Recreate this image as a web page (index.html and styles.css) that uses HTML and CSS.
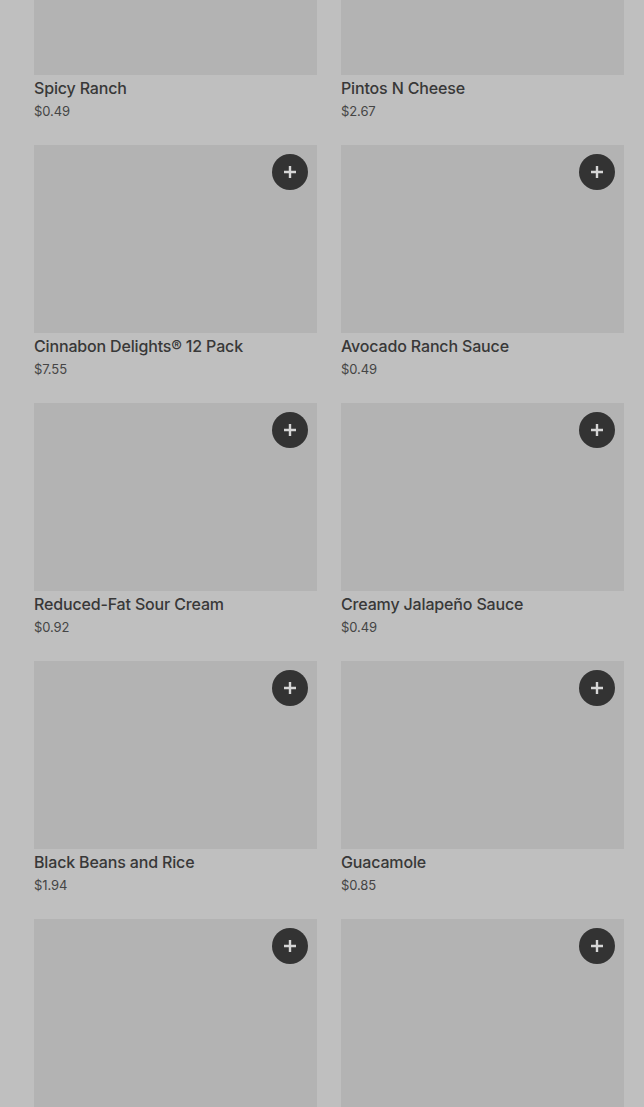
FILE: index.html
```html
<!DOCTYPE html>
<html>
<head>
<meta charset="utf-8">
<link rel="stylesheet" href="styles.css">
</head>
<body>
<div class="grid">
  <div class="card"><div class="img"></div><div class="name">Spicy Ranch</div><div class="price">$0.49</div></div>
  <div class="card"><div class="img"></div><div class="name">Pintos N Cheese</div><div class="price">$2.67</div></div>
  <div class="card"><div class="img"><span class="add"><svg width="14" height="14" viewBox="0 0 14 14"><path d="M7 1v12M1 7h12" stroke="currentColor" stroke-width="2.4"/></svg></span></div><div class="name">Cinnabon Delights® 12 Pack</div><div class="price">$7.55</div></div>
  <div class="card"><div class="img"><span class="add"><svg width="14" height="14" viewBox="0 0 14 14"><path d="M7 1v12M1 7h12" stroke="currentColor" stroke-width="2.4"/></svg></span></div><div class="name">Avocado Ranch Sauce</div><div class="price">$0.49</div></div>
  <div class="card"><div class="img"><span class="add"><svg width="14" height="14" viewBox="0 0 14 14"><path d="M7 1v12M1 7h12" stroke="currentColor" stroke-width="2.4"/></svg></span></div><div class="name">Reduced-Fat Sour Cream</div><div class="price">$0.92</div></div>
  <div class="card"><div class="img"><span class="add"><svg width="14" height="14" viewBox="0 0 14 14"><path d="M7 1v12M1 7h12" stroke="currentColor" stroke-width="2.4"/></svg></span></div><div class="name">Creamy Jalapeño Sauce</div><div class="price">$0.49</div></div>
  <div class="card"><div class="img"><span class="add"><svg width="14" height="14" viewBox="0 0 14 14"><path d="M7 1v12M1 7h12" stroke="currentColor" stroke-width="2.4"/></svg></span></div><div class="name">Black Beans and Rice</div><div class="price">$1.94</div></div>
  <div class="card"><div class="img"><span class="add"><svg width="14" height="14" viewBox="0 0 14 14"><path d="M7 1v12M1 7h12" stroke="currentColor" stroke-width="2.4"/></svg></span></div><div class="name">Guacamole</div><div class="price">$0.85</div></div>
  <div class="card"><div class="img"><span class="add"><svg width="14" height="14" viewBox="0 0 14 14"><path d="M7 1v12M1 7h12" stroke="currentColor" stroke-width="2.4"/></svg></span></div></div>
  <div class="card"><div class="img"><span class="add"><svg width="14" height="14" viewBox="0 0 14 14"><path d="M7 1v12M1 7h12" stroke="currentColor" stroke-width="2.4"/></svg></span></div></div>
</div>
</body>
</html>
```
FILE: styles.css
```css
html, body {
  margin: 0;
  padding: 0;
  background: #bfbfbf;
  overflow: hidden;
  height: 1107px;
}
body {
  font-family: Inter, "Noto Sans", sans-serif;
  color: #383838;
}
.grid {
  display: grid;
  grid-template-columns: 283px 283px;
  column-gap: 24px;
  row-gap: 24px;
  padding: 0 20px 0 34px;
  margin-top: -113px;
}
.card {
  display: flex;
  flex-direction: column;
}
.img {
  position: relative;
  height: 188px;
  background: #b3b3b3;
}
.add {
  position: absolute;
  top: 9px;
  right: 9px;
  width: 36px;
  height: 36px;
  border-radius: 50%;
  background: #333333;
  color: #d6d6d6;
  display: flex;
  align-items: center;
  justify-content: center;
}
.add svg {
  display: block;
}
.name {
  font-size: 16px;
  font-weight: 500;
  line-height: 26px;
  letter-spacing: -0.16px;
  white-space: nowrap;
}
.price {
  font-size: 13px;
  font-weight: 400;
  line-height: 20px;
  letter-spacing: -0.1px;
  color: #454545;
}
```
